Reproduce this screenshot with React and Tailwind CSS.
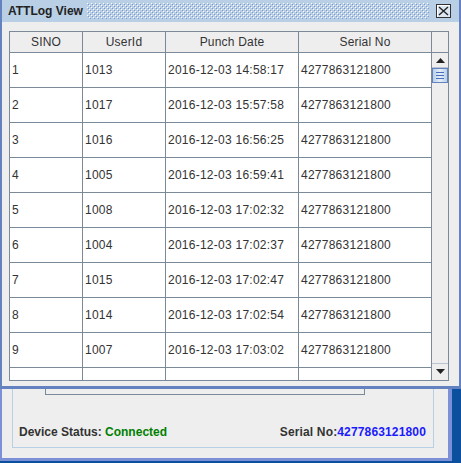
import React from 'react';

const SERIAL = '4277863121800';

const logs = [
    [1, 1013, '2016-12-03 14:58:17'],
    [2, 1017, '2016-12-03 15:57:58'],
    [3, 1016, '2016-12-03 16:56:25'],
    [4, 1005, '2016-12-03 16:59:41'],
    [5, 1008, '2016-12-03 17:02:32'],
    [6, 1004, '2016-12-03 17:02:37'],
    [7, 1015, '2016-12-03 17:02:47'],
    [8, 1014, '2016-12-03 17:02:54'],
    [9, 1007, '2016-12-03 17:03:02'],
    ['', '', ''],
];

const Bumps = () => (
    <svg className="block h-full w-full">
        <defs>
            <pattern id="bumps" width="4" height="4" patternUnits="userSpaceOnUse">
                <rect x="0" y="0" width="1" height="1" fill="#ffffff" />
                <rect x="1" y="1" width="1" height="1" fill="#7d9bd0" />
                <rect x="2" y="2" width="1" height="1" fill="#ffffff" />
                <rect x="3" y="3" width="1" height="1" fill="#7d9bd0" />
            </pattern>
        </defs>
        <rect width="100%" height="100%" fill="url(#bumps)" />
    </svg>
);

const Cell = ({ children, className = '' }) => (
    <div className={`flex items-center overflow-hidden whitespace-nowrap border-b border-r border-[#7a8a99] pl-[2px] tracking-[0.25px] ${className}`}>
        {children}
    </div>
);

const Header = ({ children }) => (
    <div className="flex h-[21px] items-center justify-center border-b border-r border-[#7a8a99] bg-[#eeeeee] text-[12px] tracking-[0.2px] text-[#333]">
        {children}
    </div>
);

const ScrollBar = () => (
    <div className="flex w-[16px] flex-col bg-[#eeeeee]">
        {/* corner above the bar */}
        <div className="h-[21px] border-b border-[#7a8a99]" />
        <div className="flex flex-1 flex-col">
            {/* up */}
            <div className="flex h-[15px] items-center justify-center border-b border-[#b8c4d0]">
                <svg width="9" height="5" viewBox="0 0 9 5">
                    <path d="M4.5 0 L9 5 L0 5 Z" fill="#222" />
                </svg>
            </div>
            {/* thumb */}
            <div className="flex h-[15px] flex-col items-center justify-center gap-[2px] border border-[#6382bf] bg-gradient-to-r from-[#b8cfe5] via-[#e6eef8] to-[#b8cfe5]">
                <div className="h-px w-[8px] bg-[#4a6fc0]" />
                <div className="h-px w-[8px] bg-[#4a6fc0]" />
                <div className="h-px w-[8px] bg-[#4a6fc0]" />
            </div>
            <div className="flex-1" />
            {/* down */}
            <div className="flex h-[16px] items-center justify-center border-t border-[#b8c4d0]">
                <svg width="9" height="5" viewBox="0 0 9 5">
                    <path d="M0 0 L9 0 L4.5 5 Z" fill="#222" />
                </svg>
            </div>
            <div className="h-px" />
        </div>
    </div>
);

const LogFrame = () => (
    <div className="absolute left-0 top-0 flex h-[389px] w-[461px] flex-col border-x-2 border-b-[3px] border-[#6382bf] bg-[#eeeeee]">
        {/* title bar */}
        <div className="flex h-[22px] shrink-0 items-center bg-[#b8cfe5] pl-[6px] pr-[8px]">
            <span className="text-[12px] font-bold text-[#222]">ATTLog View</span>
            <div className="ml-[4px] mr-[7px] h-[16px] flex-1">
                <Bumps />
            </div>
            <div className="flex h-[14px] w-[15px] items-center justify-center border border-[#333] bg-[#dde7f2] shadow-[inset_1px_1px_0_#ffffff]">
                <svg width="11" height="10" viewBox="0 0 11 10">
                    <path d="M1 1 L10 9 M10 1 L1 9" stroke="#222" strokeWidth="1.4" />
                </svg>
            </div>
        </div>

        {/* table in scroll pane */}
        <div className="pl-[7px] pt-[9px]">
            <div className="flex h-[350px] w-[440px] overflow-hidden border border-[#7a8a99] bg-white">
                <div className="w-[422px] overflow-hidden">
                    <div className="grid grid-cols-[73px_83px_133px_133px]">
                        <Header>SINO</Header>
                        <Header>UserId</Header>
                        <Header>Punch Date</Header>
                        <Header>Serial No</Header>
                    </div>
                    {logs.map((r, i) => (
                        <div key={i} className="grid h-[35px] grid-cols-[73px_83px_133px_133px] text-[12px] text-[#333]">
                            <Cell>{r[0]}</Cell>
                            <Cell>{r[1]}</Cell>
                            <Cell>{r[2]}</Cell>
                            <Cell>{r[0] === '' ? '' : SERIAL}</Cell>
                        </div>
                    ))}
                </div>
                <ScrollBar />
            </div>
        </div>
    </div>
);

export default function App() {
    return (
        <div className="relative flex h-[463px] w-[461px] overflow-hidden bg-[#0b4f9f] font-['Liberation_Sans',Arial,sans-serif]">
            {/* main window behind */}
            <div className="flex h-[461px] w-[452px] flex-col border-b-[3px] border-l-2 border-r-[4px] border-[#7b90d6] bg-[#eeeeee]">
                <div className="h-[387px] shrink-0" />
                <div className="ml-[10px] h-[2px] w-[436px] bg-[#3d4a63]" />
                <div className="ml-[10px] flex h-[59px] w-[422px] flex-col border-x border-b border-[#b8cfe5]">
                    <div className="ml-[32px] h-[6px] w-[320px] border-x border-b border-[#7a8a99]" />
                    <div className="mt-[30px] flex h-[14px] items-center justify-between pl-[6px] pr-[7px] text-[12px] font-bold text-[#333]">
                        <span>
                            Device Status: <span className="text-[#008000]">Connected</span>
                        </span>
                        <span className="tracking-[0.15px]">
                            Serial No:<span className="text-[#1a1aff]">{SERIAL}</span>
                        </span>
                    </div>
                </div>
            </div>

            <LogFrame />
        </div>
    );
}
